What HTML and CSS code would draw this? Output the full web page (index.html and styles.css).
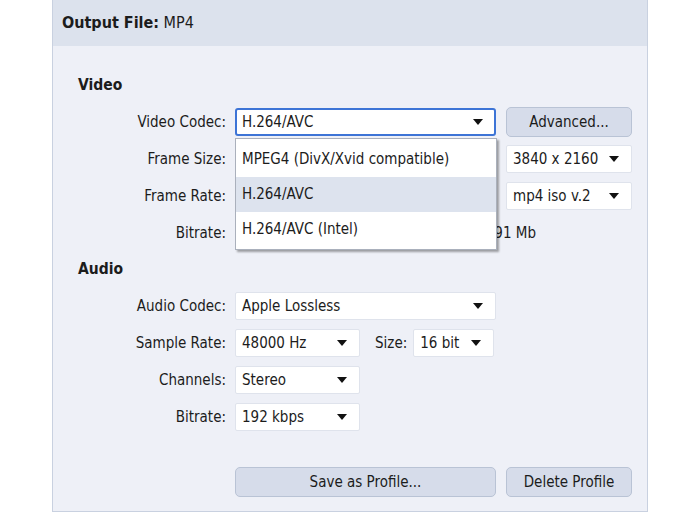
FILE: index.html
```html
<!DOCTYPE html>
<html lang="en">
  <head>
    <meta charset="UTF-8" />
    <title>Output File</title>
    <link rel="stylesheet" href="styles.css">
  </head>
  <body>
    <div class="panel">
      <div class="panel-head">
        <b>Output File:</b> MP4
      </div>

      <div class="panel-body">
        <h2>Video</h2>

        <div class="row">
          <label>Video Codec:</label>
          <div class="combo focus wide">
            <span>H.264/AVC</span><i class="arrow"></i>
            <ul class="droplist">
              <li>MPEG4 (DivX/Xvid compatible)</li>
              <li class="current">H.264/AVC</li>
              <li>H.264/AVC (Intel)</li>
            </ul>
          </div>
          <button class="btn side">Advanced...</button>
        </div>

        <!-- left combos of these rows sit under the open list -->
        <div class="row">
          <label>Frame Size:</label>
          <div class="combo wide"><span></span><i class="arrow"></i></div>
          <div class="combo side"><span>3840 x 2160</span><i class="arrow"></i></div>
        </div>

        <div class="row">
          <label>Frame Rate:</label>
          <div class="combo wide"><span></span><i class="arrow"></i></div>
          <div class="combo side"><span>mp4 iso v.2</span><i class="arrow"></i></div>
        </div>

        <div class="row">
          <label>Bitrate:</label>
          <div class="text-value">1491 Mb</div>
        </div>

        <h2 class="audio">Audio</h2>

        <div class="row">
          <label>Audio Codec:</label>
          <div class="combo wide"><span>Apple Lossless</span><i class="arrow"></i></div>
        </div>

        <div class="row">
          <label>Sample Rate:</label>
          <div class="combo short"><span>48000 Hz</span><i class="arrow"></i></div>
          <label class="inline">Size:</label>
          <div class="combo tiny"><span>16 bit</span><i class="arrow"></i></div>
        </div>

        <div class="row">
          <label>Channels:</label>
          <div class="combo short"><span>Stereo</span><i class="arrow"></i></div>
        </div>

        <div class="row">
          <label>Bitrate:</label>
          <div class="combo short"><span>192 kbps</span><i class="arrow"></i></div>
        </div>

        <div class="row actions">
          <button class="btn wide">Save as Profile...</button>
          <button class="btn side">Delete Profile</button>
        </div>
      </div>
    </div>
  </body>
</html>
```

FILE: styles.css
```css
body {
  margin: 0;
  background-color: #ffffff;
  font-family: "DejaVu Sans Condensed", "DejaVu Sans", sans-serif;
  font-size: 15px;
  color: #1c1c1c;
}

.panel {
  margin-left: 52px;
  width: 594px;
  height: 511px;
  background-color: #eef0f7;
  border: 1px solid #c9d1e0;
  border-top: none;
}

.panel-head {
  height: 46px;
  line-height: 46px;
  padding-left: 9px;
  background-color: #dce2ed;
  font-size: 16px;
}

.panel-body {
  padding-top: 29px;
}

h2 {
  margin: 0 0 13px 25px;
  font-size: 15.5px;
  line-height: 20px;
  font-weight: bold;
}

h2.audio {
  margin-top: 12px;
}

.row {
  display: flex;
  align-items: center;
  height: 28px;
  margin-bottom: 9px;
}

.row label {
  width: 173px;
  margin-right: 9px;
  text-align: right;
}

.row label.inline {
  width: auto;
  margin-left: 15px;
  margin-right: 6px;
}

.combo {
  position: relative;
  box-sizing: border-box;
  height: 28px;
  display: flex;
  align-items: center;
  justify-content: space-between;
  padding: 0 12px 0 6px;
  background-color: #ffffff;
  border: 1px solid #dfe3ec;
  border-radius: 2px;
}

.combo.focus {
  border: 2px solid #3d74d6;
  border-radius: 3px;
  padding-left: 5px;
  padding-right: 11px;
}

.wide {
  width: 261px;
}

.short {
  width: 125px;
}

.tiny {
  width: 81px;
}

.side {
  width: 126px;
  margin-left: 10px;
}

.arrow {
  width: 0;
  height: 0;
  border-left: 5px solid transparent;
  border-right: 5px solid transparent;
  border-top: 6px solid #111111;
}

.text-value {
  width: 301px;
  text-align: right;
}

.droplist {
  position: absolute;
  top: 28px;
  left: -2px;
  width: 262px;
  box-sizing: border-box;
  margin: 0;
  padding: 3px 0 2px 0;
  list-style: none;
  background-color: #ffffff;
  border: 1px solid #aab0bc;
  box-shadow: 2px 2px 2px rgba(0, 0, 0, 0.35);
  z-index: 5;
}

.droplist li {
  height: 35px;
  line-height: 35px;
  padding-left: 6px;
}

.droplist li.current {
  background-color: #dde3ee;
}

.btn {
  box-sizing: border-box;
  height: 30px;
  font-family: inherit;
  font-size: 15px;
  color: #1c1c1c;
  background-color: #d6dcea;
  border: 1px solid #b9c3d5;
  border-radius: 5px;
}

.actions {
  margin-top: 37px;
  padding-left: 182px;
}
```
